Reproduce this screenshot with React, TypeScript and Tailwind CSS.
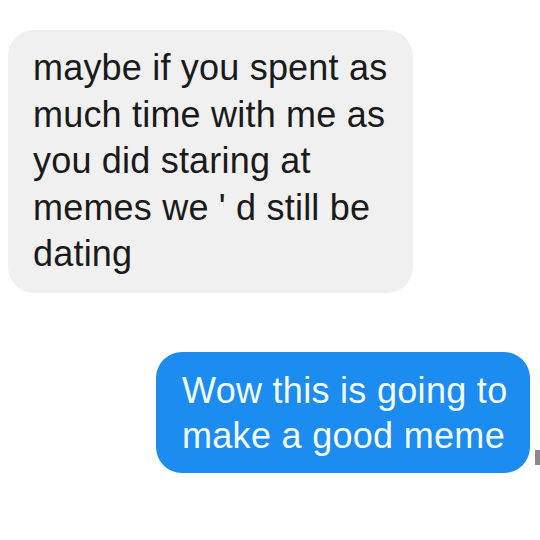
import React from 'react';

const App = () => {
    return (
        // whole screenshot, white background with two message bubbles
        <div className="w-[540px] h-[540px] bg-white overflow-hidden font-['Liberation_Sans',Arial,sans-serif]">
            {/* received message */}
            <div className="pt-[30px] pl-[8px]">
                <div className="w-[405px] h-[263px] rounded-[26px] bg-[#f0f0f0] pl-[25px] pt-[15px] text-[36px] leading-[46.5px] text-[#1a1a1a] tracking-[0.2px]">
                    maybe if you spent as<br />
                    much time with me as<br />
                    you did staring at<br />
                    memes we ' d still be<br />
                    dating
                </div>
            </div>

            {/* sent message + tail stub */}
            <div className="flex items-end mt-[59px] pl-[156px]">
                <div className="w-[374px] h-[121px] rounded-[26px] bg-[#1d8cf1] pl-[26px] pt-[16px] text-[36px] leading-[45px] text-[#f2fbff] tracking-[0.3px]">
                    Wow this is going to<br />
                    make a good meme
                </div>
                <div className="w-[5px] h-[15px] bg-[#8a8a8a] ml-[5px] mb-[8px]" />
            </div>
        </div>
    );
}

export default App;
